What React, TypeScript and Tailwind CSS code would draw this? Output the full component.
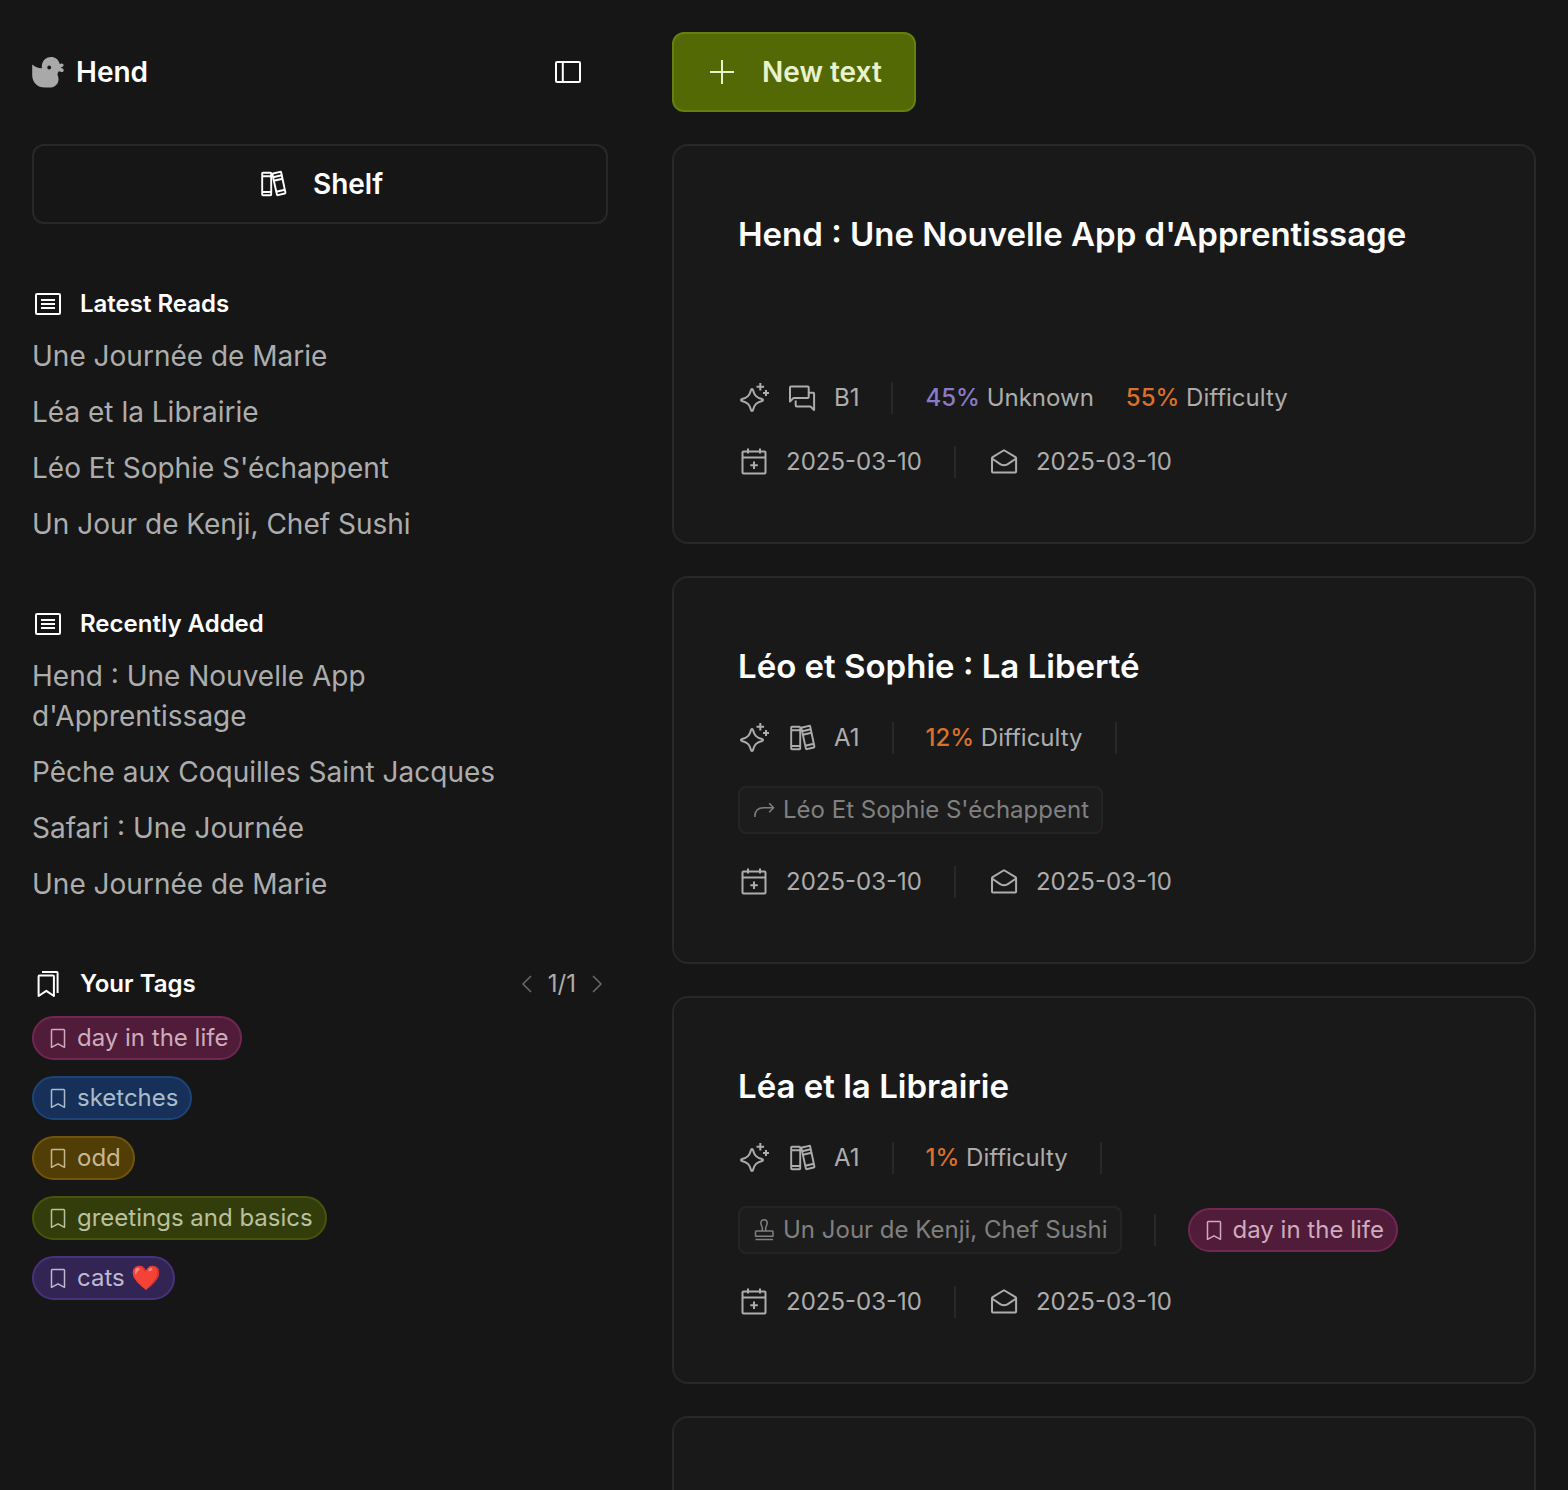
import type { ReactNode } from "react";

type IconProps = { children: ReactNode; size?: "sm" | "md" };

// md icons are drawn on a 32 grid, sm icons on a 24 grid
function Icon({ children, size = "md" }: IconProps) {
  return (
    <svg
      viewBox={size === "md" ? "0 0 32 32" : "0 0 24 24"}
      className={`shrink-0 ${size === "md" ? "size-8" : "size-6"}`}
      fill="none"
      stroke="currentColor"
      strokeWidth={size === "md" ? 2 : 1.5}
      strokeLinejoin="round"
      aria-hidden="true"
    >
      {children}
    </svg>
  );
}

const DuckIcon = () => (
  <svg viewBox="0 0 32 32" className="size-8 shrink-0" fill="#a9a9a9" aria-hidden="true">
    <path d="M0.2 8.6C2.8 11 6 12.2 9.9 12.2C9.2 6 13 1 19 1C23.2 1 26.6 3.7 27.7 7.9L29.5 7.5C31.8 7.3 32.3 10 30.5 10.8L28.6 11.8L30.7 12.6C32.6 13.7 31.7 16.4 29.6 16.1L26.9 15.3C25.4 17.3 25.3 18.3 26 20.2C28 26 24.2 31.6 17.5 31.6H13C5.2 31.6 0.2 26.3 0.2 19Z" />
    <circle cx="17.2" cy="11.5" r="1.9" fill="#161616" />
  </svg>
);

const PanelIcon = () => (
  <Icon>
    <rect x="4" y="6" width="24" height="20" rx="1" />
    <path d="M10.8 6v20" />
  </Icon>
);

const ListIcon = () => (
  <Icon>
    <rect x="4" y="6" width="24" height="20" rx="1" />
    <path d="M9 12h14M9 16h14M9 20h14" />
  </Icon>
);

const BooksIcon = () => (
  <Icon>
    <g strokeWidth="1.9">
      <rect x="5.2" y="4.8" width="9" height="22.5" rx="0.8" />
      <path d="M5.2 8.3h9M5.2 24h9" />
      <path d="M16 5.5l7.2-1.7q.8-.1 1 .7l4.2 20q.1.8-.7 1l-6.8 1.7q-.8.1-1-.7L15.4 6.3q-.1-.6.6-.8z" />
      <path d="M16.1 9.3l8.7-2M16.9 12.7l8.7-2M19.2 23.7l8.7-2" />
    </g>
  </Icon>
);

const PlusIcon = () => (
  <Icon>
    <path d="M16 4v24M4 16h24" />
  </Icon>
);

const TagsIcon = () => (
  <Icon>
    <path d="M6.6 8.3q0-.9.9-.9H21q.9 0 .9.9V28l-7.6-5.2L6.6 28z" />
    <path d="M10 4h14.7q.9 0 .9.9V25" />
  </Icon>
);

const SparkleIcon = () => (
  <Icon>
    <path d="M14 7c.6 0 .9.4 1 .9 1.3 5.2 3.1 7.6 9.1 9.1.5.1.9.5.9 1s-.4.9-.9 1c-6 1.5-7.8 3.9-9.1 9.1-.1.5-.5.9-1 .9s-.9-.4-1-.9c-1.3-5.2-3.1-7.6-9.1-9.1-.5-.1-.9-.5-.9-1s.4-.9.9-1c6-1.5 7.8-3.9 9.1-9.1.1-.5.4-.9 1-.9z" />
    <path d="M22.3 1v7.6M18.5 4.8h7.6M28 8v6M25 11h6" />
  </Icon>
);

const ChatIcon = () => (
  <Icon>
    <path d="M4 19.5V5.5q0-.9.9-.9H21.8q.9 0 .9.9V15q0 .9-.9.9H7.6z" />
    <path d="M22.7 10.8h4.5q.9 0 .9.9v16.4l-3.6-3.6H10.6q-.9 0-.9-.9v-5" />
  </Icon>
);

const CalendarIcon = () => (
  <Icon>
    <rect x="4.5" y="5.5" width="23" height="22" rx="1" />
    <path d="M4.5 11.5h23M10 2.5v5M22 2.5v5M16 15.5v7.5M12.3 19.3h7.5" />
  </Icon>
);

const MailOpenIcon = () => (
  <Icon>
    <path d="M4 12.2q0-.7.6-1.1L15.5 4.5q.5-.3 1 0L27.5 11.1q.6.4.6 1.1V25.5q0 .9-.9.9H4.9q-.9 0-.9-.9z" />
    <path d="M4 12.5l8.6 5.9q3.4 1.6 6.8 0l8.7-5.9" />
  </Icon>
);

const ArrowIcon = () => (
  <Icon size="sm">
    <path d="M2.8 19c0-6 3.5-9.2 9-9.2h9.4M17.2 5.2l4.4 4.6-4.4 4.5" />
  </Icon>
);

const StampIcon = () => (
  <Icon size="sm">
    <path d="M3.5 18.2v-4.5q0-.8.8-.8h15.9q.8 0 .8.8v4.5zM3.5 21.4h17.5" />
    <path d="M10.3 12.9V9.5C9.5 8 8.8 6.4 8.8 5c0-1.9 1.3-3.2 3.2-3.2s3.2 1.3 3.2 3.2c0 1.4-.7 3-1.5 4.5v3.4" />
  </Icon>
);

const BookmarkIcon = () => (
  <Icon size="sm">
    <path d="M5.5 4.3q0-.8.8-.8h11.4q.8 0 .8.8v17l-6.5-3.5-6.5 3.5z" />
  </Icon>
);

const TAG_STYLES = {
  pink: "bg-[#501c3a] border-[#722752] text-[#ceabbd]",
  blue: "bg-[#17305a] border-[#1c4478] text-[#a8bdc9]",
  amber: "bg-[#513e06] border-[#745408] text-[#c8b68f]",
  green: "bg-[#333d0b] border-[#47550b] text-[#b9c19f]",
  purple: "bg-[#322553] border-[#46337c] text-[#bfb8cf]",
};

type Tag = { label: string; color: keyof typeof TAG_STYLES };

const TAGS: Tag[] = [
  { label: "day in the life", color: "pink" },
  { label: "sketches", color: "blue" },
  { label: "odd", color: "amber" },
  { label: "greetings and basics", color: "green" },
  { label: "cats ❤️", color: "purple" },
];

const LATEST = ["Une Journée de Marie", "Léa et la Librairie", "Léo Et Sophie S'échappent", "Un Jour de Kenji, Chef Sushi"];
const RECENT = ["Hend : Une Nouvelle App d'Apprentissage", "Pêche aux Coquilles Saint Jacques", "Safari : Une Journée", "Une Journée de Marie"];

function TagPill({ label, color }: Tag) {
  return (
    <button className={`flex h-11 items-center gap-[7px] rounded-full border-2 px-3 text-2xl whitespace-nowrap ${TAG_STYLES[color]}`}>
      <BookmarkIcon />
      {label}
    </button>
  );
}

function SectionTitle({ icon, children }: { icon: ReactNode; children: ReactNode }) {
  return (
    <h2 className="flex h-8 items-center gap-4 text-2xl font-semibold text-white">
      {icon}
      {children}
    </h2>
  );
}

function ReadList({ title, items }: { title: string; items: string[] }) {
  return (
    <section className="flex flex-col gap-4">
      <SectionTitle icon={<ListIcon />}>{title}</SectionTitle>
      <ul className="flex flex-col gap-4 pr-8 text-[28px] leading-10">
        {items.map(item => (
          <li key={item}>
            <a href="#" className="block">{item}</a>
          </li>
        ))}
      </ul>
    </section>
  );
}

function Sidebar() {
  return (
    <aside className="flex w-[640px] shrink-0 flex-col gap-16 p-8">
      <div className="flex flex-col gap-8">
        <header className="flex h-20 items-center justify-between pr-6">
          <a href="#" className="flex items-center gap-3 text-[28px] font-semibold text-white">
            <DuckIcon />
            Hend
          </a>
          <button aria-label="Toggle sidebar" className="text-white">
            <PanelIcon />
          </button>
        </header>
        <button className="flex h-20 items-center justify-center gap-6 rounded-xl border-2 border-[#282828] text-[28px] font-semibold text-white">
          <BooksIcon />
          Shelf
        </button>
      </div>

      <ReadList title="Latest Reads" items={LATEST} />
      <ReadList title="Recently Added" items={RECENT} />

      <section className="flex flex-col gap-4">
        <div className="flex items-center justify-between">
          <SectionTitle icon={<TagsIcon />}>Your Tags</SectionTitle>
          <div className="flex items-center gap-2 text-2xl">
            <button aria-label="Previous tags" className="text-[#6c6c6c]">
              <Icon size="sm"><path d="M15 4l-8 8 8 8" /></Icon>
            </button>
            1/1
            <button aria-label="Next tags" className="text-[#6c6c6c]">
              <Icon size="sm"><path d="M9 4l8 8-8 8" /></Icon>
            </button>
          </div>
        </div>
        <div className="flex flex-col items-start gap-4">
          {TAGS.map(tag => <TagPill key={tag.label} {...tag} />)}
        </div>
      </section>
    </aside>
  );
}

const Divider = () => <span className="h-8 w-0.5 shrink-0 bg-[#282828]" />;

function Dates() {
  return (
    <div className="flex h-8 items-center gap-8">
      <span className="flex items-center gap-4"><CalendarIcon />2025-03-10</span>
      <Divider />
      <span className="flex items-center gap-4"><MailOpenIcon />2025-03-10</span>
    </div>
  );
}

type CardProps = {
  title: string;
  level: string;
  kind: ReactNode;
  unknown?: string;
  difficulty: string;
  related?: { icon: ReactNode; label: string };
  tag?: Tag;
};

function TextCard({ title, level, kind, unknown, difficulty, related, tag }: CardProps) {
  return (
    <article className={`flex flex-col gap-8 rounded-2xl border-2 border-[#282828] bg-[#191919] p-16 text-2xl ${related ? "" : "min-h-[400px]"}`}>
      <h3 className="flex-1 text-[33px] leading-12 font-semibold text-white">{title}</h3>
      <div className="flex h-8 items-center gap-8">
        <span className="flex items-center gap-4"><SparkleIcon />{kind}{level}</span>
        <Divider />
        {unknown && <span><b className="font-medium text-[#8a7bc8]">{unknown}</b> Unknown</span>}
        <span><b className="font-medium text-[#d9702c]">{difficulty}</b> Difficulty</span>
        {related && <Divider />}
      </div>
      {related && (
        <div className="flex items-center gap-8">
          <button className="flex h-12 items-center gap-[7px] rounded-lg border-2 border-[#242424] bg-[#1c1c1c] px-3 whitespace-nowrap text-[#808080]">
            {related.icon}
            {related.label}
          </button>
          {tag && <Divider />}
          {tag && <TagPill {...tag} />}
        </div>
      )}
      <Dates />
    </article>
  );
}

export default function App() {
  return (
    <div className="flex h-screen overflow-hidden bg-[#161616] font-['Inter',sans-serif] text-[#adadad]">
      <Sidebar />
      <main className="flex min-w-0 flex-1 flex-col gap-8 overflow-y-auto p-8 [scrollbar-width:none] *:shrink-0">
        <button className="flex h-20 items-center gap-6 self-start rounded-xl border-2 border-[#66800c] bg-[#536906] px-8 text-[28px] font-semibold text-[#e9f2cb]">
          <PlusIcon />
          New text
        </button>
        <TextCard title="Hend : Une Nouvelle App d'Apprentissage" level="B1" kind={<ChatIcon />} unknown="45%" difficulty="55%" />
        <TextCard
          title="Léo et Sophie : La Liberté"
          level="A1"
          kind={<BooksIcon />}
          difficulty="12%"
          related={{ icon: <ArrowIcon />, label: "Léo Et Sophie S'échappent" }}
        />
        <TextCard
          title="Léa et la Librairie"
          level="A1"
          kind={<BooksIcon />}
          difficulty="1%"
          related={{ icon: <StampIcon />, label: "Un Jour de Kenji, Chef Sushi" }}
          tag={TAGS[0]}
        />
        <article className="min-h-[388px] rounded-2xl border-2 border-[#282828] bg-[#191919]" />
      </main>
    </div>
  );
}
